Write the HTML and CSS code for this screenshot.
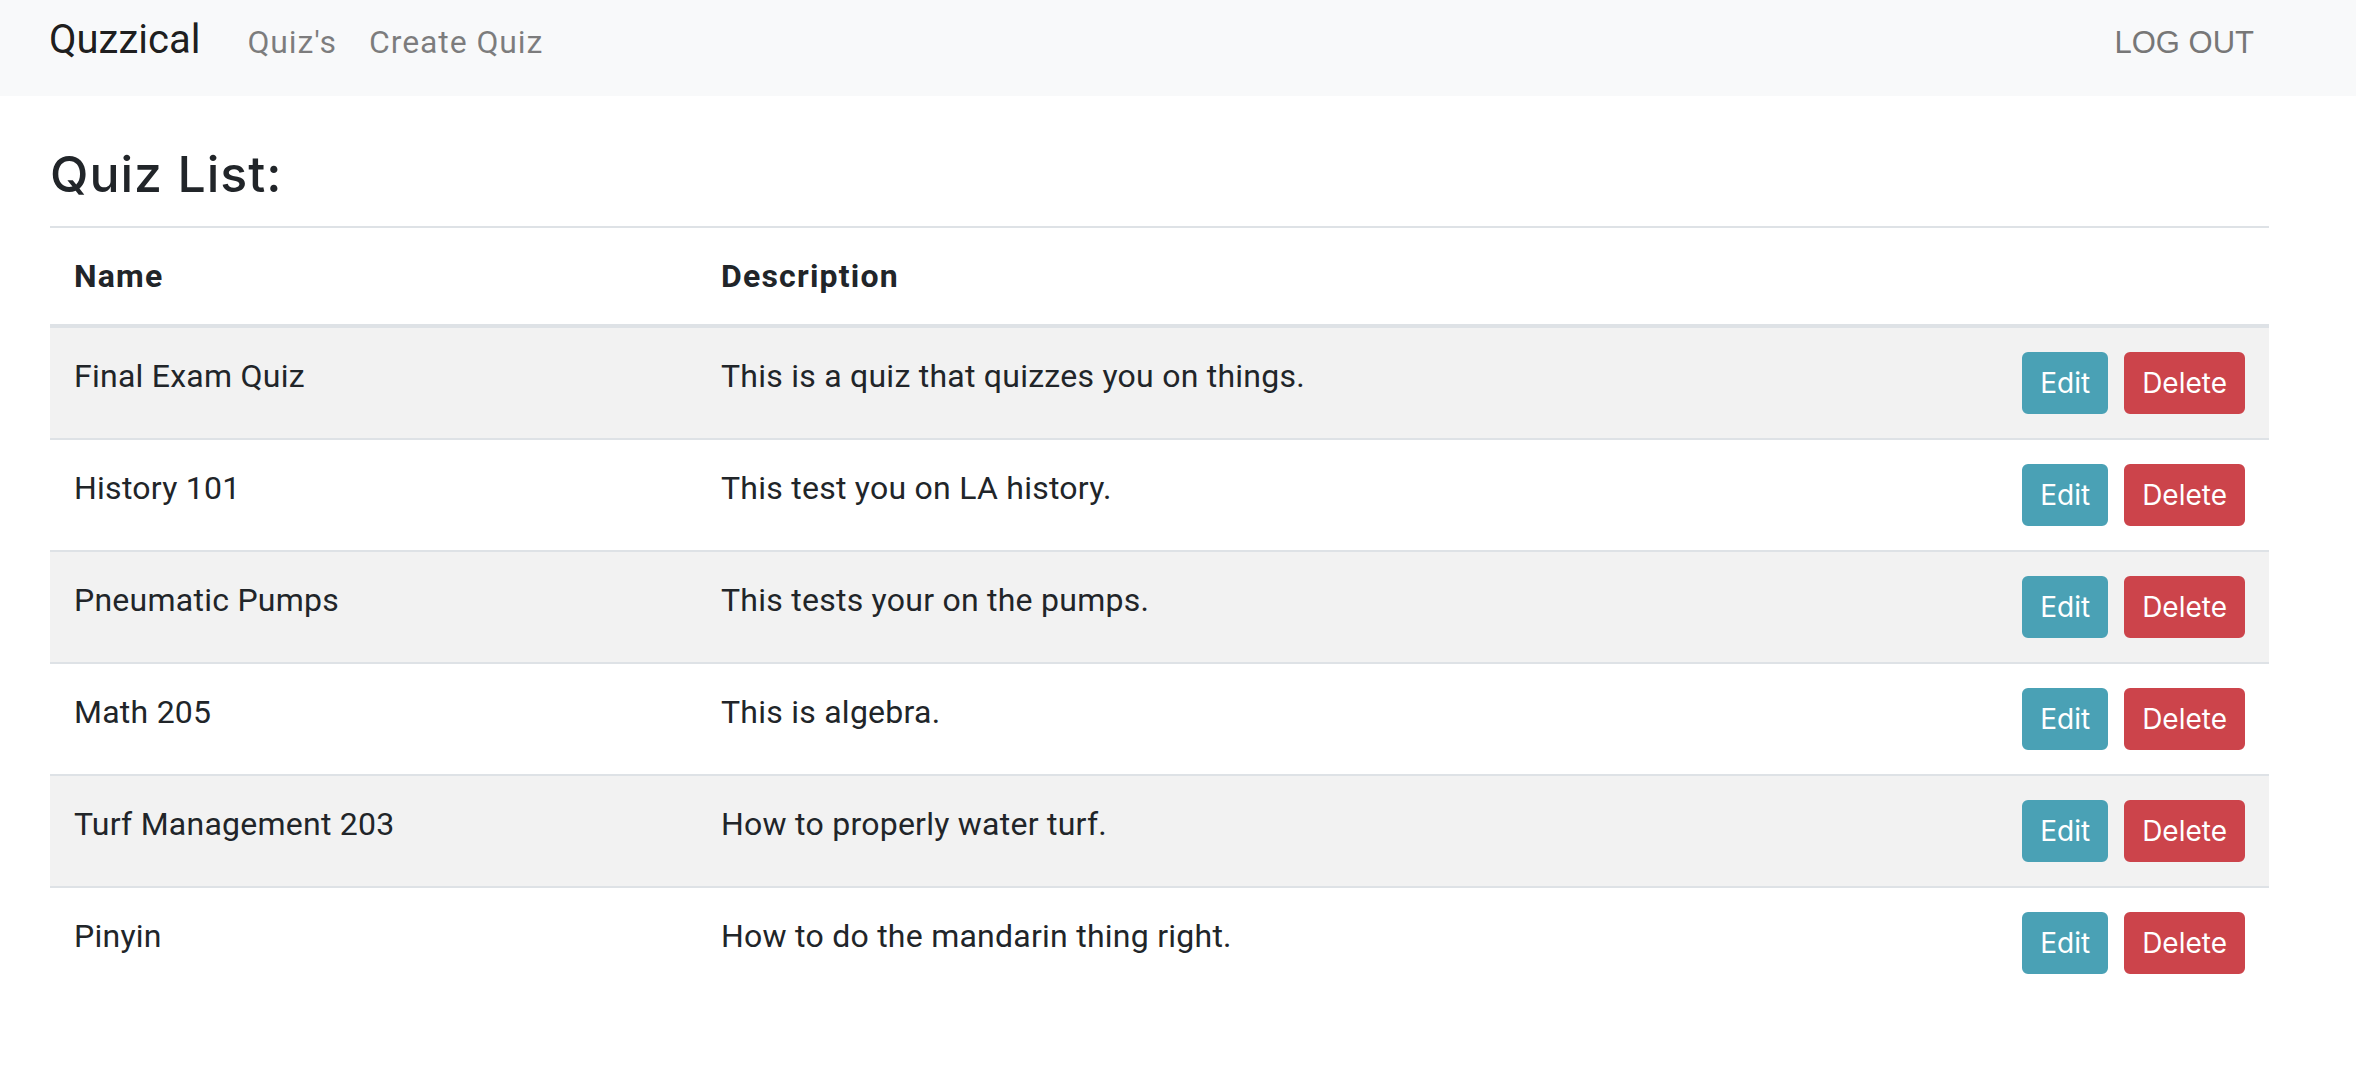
FILE: index.html
```html
<!DOCTYPE html>
<html lang="en">
<head>
<meta charset="utf-8">
<title>Quzzical</title>
<link rel="stylesheet" href="styles.css">
</head>
<body>
<nav class="navbar">
  <a class="brand" href="#">Quzzical</a>
  <a class="nav-link" href="#">Quiz's</a>
  <a class="nav-link" href="#">Create Quiz</a>
  <a class="logout" href="#">LOG OUT</a>
</nav>
<main class="content">
  <h2 class="title">Quiz List:</h2>
  <table class="quiz-table">
    <thead>
      <tr><th class="col-name">Name</th><th class="col-desc">Description</th><th class="col-actions"></th></tr>
    </thead>
    <tbody>
      <tr><td>Final Exam Quiz</td><td>This is a quiz that quizzes you on things.</td><td class="col-actions"><div class="actions"><button class="btn btn-edit">Edit</button><button class="btn btn-delete">Delete</button></div></td></tr>
      <tr><td>History 101</td><td>This test you on LA history.</td><td class="col-actions"><div class="actions"><button class="btn btn-edit">Edit</button><button class="btn btn-delete">Delete</button></div></td></tr>
      <tr><td>Pneumatic Pumps</td><td>This tests your on the pumps.</td><td class="col-actions"><div class="actions"><button class="btn btn-edit">Edit</button><button class="btn btn-delete">Delete</button></div></td></tr>
      <tr><td>Math 205</td><td>This is algebra.</td><td class="col-actions"><div class="actions"><button class="btn btn-edit">Edit</button><button class="btn btn-delete">Delete</button></div></td></tr>
      <tr><td>Turf Management 203</td><td>How to properly water turf.</td><td class="col-actions"><div class="actions"><button class="btn btn-edit">Edit</button><button class="btn btn-delete">Delete</button></div></td></tr>
      <tr><td>Pinyin</td><td>How to do the mandarin thing right.</td><td class="col-actions"><div class="actions"><button class="btn btn-edit">Edit</button><button class="btn btn-delete">Delete</button></div></td></tr>
    </tbody>
  </table>
</main>
</body>
</html>
```
FILE: styles.css
```css
* { box-sizing: border-box; }

html, body {
  margin: 0;
  background: #ffffff;
  font-family: Roboto, "Noto Sans", sans-serif;
  color: #212529;
}

a { text-decoration: none; }

.navbar {
  display: flex;
  align-items: baseline;
  height: 96px;
  padding: 20px 102px 0 49px;
  background: #f8f9fa;
}

.brand {
  font-size: 40px;
  line-height: 40px;
  color: rgba(0, 0, 0, 0.9);
  margin-right: 31px;
}

.nav-link {
  font-size: 32px;
  line-height: 40px;
  letter-spacing: 0.9px;
  padding: 0 16px;
  color: rgba(0, 0, 0, 0.5);
}

.logout {
  margin-left: auto;
  font-family: "Liberation Sans", Arial, sans-serif;
  font-size: 31px;
  line-height: 40px;
  color: #777777;
}

.content {
  padding: 50px 87px 40px 50px;
}

.title {
  margin: 0 0 22px 0;
  font-family: Inter, Roboto, sans-serif;
  font-size: 50px;
  font-weight: 500;
  letter-spacing: 1px;
  line-height: 57.6px;
  color: #212529;
}

.quiz-table {
  width: 100%;
  border-collapse: collapse;
  font-size: 32px;
  line-height: 48px;
  letter-spacing: 0.25px;
  color: #212529;
}

.quiz-table th,
.quiz-table td {
  padding: 24px;
  text-align: left;
  vertical-align: top;
  border-top: 2px solid #dee2e6;
}

.quiz-table thead th {
  font-weight: 700;
  letter-spacing: 1.2px;
  border-bottom: 4px solid #dee2e6;
}

.quiz-table tbody tr:nth-child(odd) {
  background: #f2f2f2;
}

.col-name { width: 647px; }

.col-actions {
  width: 1%;
  white-space: nowrap;
}

.actions {
  display: flex;
  justify-content: flex-end;
  gap: 16px;
}

.btn {
  font-family: Inter, Roboto, sans-serif;
  font-size: 28px;
  line-height: 42px;
  letter-spacing: 0;
  padding: 8px 16px;
  border: 2px solid transparent;
  border-radius: 6px;
  color: #ffffff;
  cursor: pointer;
}

.btn-edit {
  background: #4aa1b5;
  border-color: #4aa1b5;
}

.btn-delete {
  background: #cc444b;
  border-color: #cc444b;
}
```
